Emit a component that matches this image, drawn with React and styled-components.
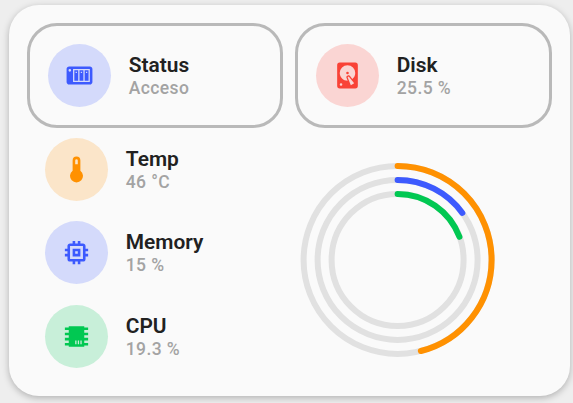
import React from "react";
import styled, { createGlobalStyle } from "styled-components";

const GlobalStyle = createGlobalStyle`
  * { box-sizing: border-box; }
  body {
    margin: 0;
    background: #eeeeee;
    font-family: Roboto, "Liberation Sans", sans-serif;
    overflow: hidden;
  }
`;

const Page = styled.main`
  width: 573px;
  height: 403px;
  padding: 5px 3px 7px 9px;
`;

const Card = styled.section`
  height: 391px;
  padding: 18px 18px 0;
  border-radius: 30px;
  background: #fafafa;
  box-shadow: 0 2px 7px rgba(0, 0, 0, 0.26);
`;

const TileRow = styled.div`
  display: grid;
  grid-template-columns: 256px 257px;
  column-gap: 12px;
`;

const Tile = styled.div`
  height: 105px;
  padding: 18px;
  border: 3px solid #b9b9b9;
  border-radius: 30px;
`;

const Body = styled.div`
  display: grid;
  grid-template-columns: 256px 1fr;
`;

const SensorList = styled.div`
  display: flex;
  flex-direction: column;
  gap: 20.45px;
  padding: 10px 18px 0;
`;

const Entity = styled.div`
  display: flex;
  align-items: center;
  height: 63px;
  gap: 17.75px;
`;

const IconBadge = styled.div`
  display: flex;
  align-items: center;
  justify-content: center;
  flex: none;
  width: 63px;
  height: 63px;
  border-radius: 50%;
  color: ${(p) => p.$color};
  background: ${(p) => p.$tint};
`;

const Glyph = styled.svg`
  width: 31px;
  height: 31px;
  fill: currentColor;
`;

const Labels = styled.div`
  display: flex;
  flex-direction: column;
  padding-top: 1.4px;
  white-space: nowrap;
`;

const Name = styled.span`
  font-size: 20.9px;
  font-weight: 600;
  line-height: 23px;
  color: #212121;
`;

const Value = styled.span`
  font-size: 17.5px;
  font-weight: 500;
  line-height: 22px;
  letter-spacing: 0.4px;
  color: #a3a3a3;
`;

const Gauge = styled.svg`
  width: 200px;
  height: 200px;
  margin: 32px 0 0 14px;
`;

const Track = styled.circle`
  fill: none;
  stroke: #e1e1e1;
  stroke-width: 6;
`;

const Arc = styled(Track)`
  stroke: ${(p) => p.$color};
  stroke-linecap: round;
`;

const icons = {
  nas: "M4,5C2.89,5 2,5.89 2,7V17C2,18.11 2.89,19 4,19H20C21.11,19 22,18.11 22,17V7C22,5.89 21.11,5 20,5H4M4.5,7A1,1 0 0,1 5.5,8A1,1 0 0,1 4.5,9A1,1 0 0,1 3.5,8A1,1 0 0,1 4.5,7M7,7H20V17H7V7M8,8V16H11V8H8M12,8V16H15V8H12M16,8V16H19V8H16M9,9H10V10H9V9M13,9H14V10H13V9M17,9H18V10H17V9Z",
  disk: "M6,2H18A2,2 0 0,1 20,4V20A2,2 0 0,1 18,22H6A2,2 0 0,1 4,20V4A2,2 0 0,1 6,2M12,4A6,6 0 0,0 6,10C6,13.31 8.69,16 12.1,16L11.22,13.77C10.95,13.29 11.11,12.68 11.59,12.4L12.45,11.9C12.93,11.63 13.54,11.79 13.82,12.27L15.74,14.69C17.12,13.59 18,11.9 18,10A6,6 0 0,0 12,4M12,9A1,1 0 0,1 13,10A1,1 0 0,1 12,11A1,1 0 0,1 11,10A1,1 0 0,1 12,9M7,18A1,1 0 0,0 6,19A1,1 0 0,0 7,20A1,1 0 0,0 8,19A1,1 0 0,0 7,18M12.09,13.27L14.58,19.58L17.17,18.08L12.95,12.77L12.09,13.27Z",
  thermometer: "M15 13V5A3 3 0 0 0 9 5V13A5 5 0 1 0 15 13M12 4A1 1 0 0 1 13 5V8H11V5A1 1 0 0 1 12 4Z",
  memory: "M17,17H7V7H17M21,11V9H19V7C19,5.89 18.1,5 17,5H15V3H13V5H11V3H9V5H7C5.89,5 5,5.89 5,7V9H3V11H5V13H3V15H5V17A2,2 0 0,0 7,19H9V21H11V19H13V21H15V19H17A2,2 0 0,0 19,17V15H21V13H19V11M13,13H11V11H13M15,9H9V15H15V9Z",
  chip: "M6,4H18V5H21V7H18V9H21V11H18V13H21V15H18V17H21V19H18V20H6V19H3V17H6V15H3V13H6V11H3V9H6V7H3V5H6V4M11,15V18H12V15H11M13,15V18H14V15H13M15,15V18H16V15H15Z",
};

const blue = { color: "#3d5afe", tint: "#d4dafb" };
const red = { color: "#f94236", tint: "#fad5d3" };
const orange = { color: "#ff9101", tint: "#fbe5c9" };
const green = { color: "#01c852", tint: "#c8efd9" };

const tiles = [
  { icon: "nas", name: "Status", value: "Acceso", tone: blue },
  { icon: "disk", name: "Disk", value: "25.5 %", tone: red },
];

const sensors = [
  { icon: "thermometer", name: "Temp", value: "46 °C", tone: orange },
  { icon: "memory", name: "Memory", value: "15 %", tone: blue },
  { icon: "chip", name: "CPU", value: "19.3 %", tone: green },
];

const rings = [
  { radius: 94, percent: 46, color: orange.color },
  { radius: 80, percent: 15, color: blue.color },
  { radius: 66, percent: 19.3, color: green.color },
];

function EntityItem({ icon, name, value, tone }) {
  return (
    <Entity>
      <IconBadge $color={tone.color} $tint={tone.tint}>
        <Glyph viewBox="0 0 24 24" aria-hidden="true">
          <path d={icons[icon]} />
        </Glyph>
      </IconBadge>
      <Labels>
        <Name>{name}</Name>
        <Value>{value}</Value>
      </Labels>
    </Entity>
  );
}

function RingGauge() {
  return (
    <Gauge viewBox="-100.6 -99.9 200 200">
      {rings.map((r) => (
        <g key={r.radius} transform="rotate(-90)">
          <Track r={r.radius} />
          <Arc
            r={r.radius}
            $color={r.color}
            pathLength="100"
            strokeDasharray={`${r.percent} 100`}
          />
        </g>
      ))}
    </Gauge>
  );
}

export default function App() {
  return (
    <>
      <GlobalStyle />
      <Page>
        <Card>
          <TileRow>
            {tiles.map((t) => (
              <Tile key={t.name}>
                <EntityItem {...t} />
              </Tile>
            ))}
          </TileRow>
          <Body>
            <SensorList>
              {sensors.map((s) => (
                <EntityItem key={s.name} {...s} />
              ))}
            </SensorList>
            <RingGauge />
          </Body>
        </Card>
      </Page>
    </>
  );
}
